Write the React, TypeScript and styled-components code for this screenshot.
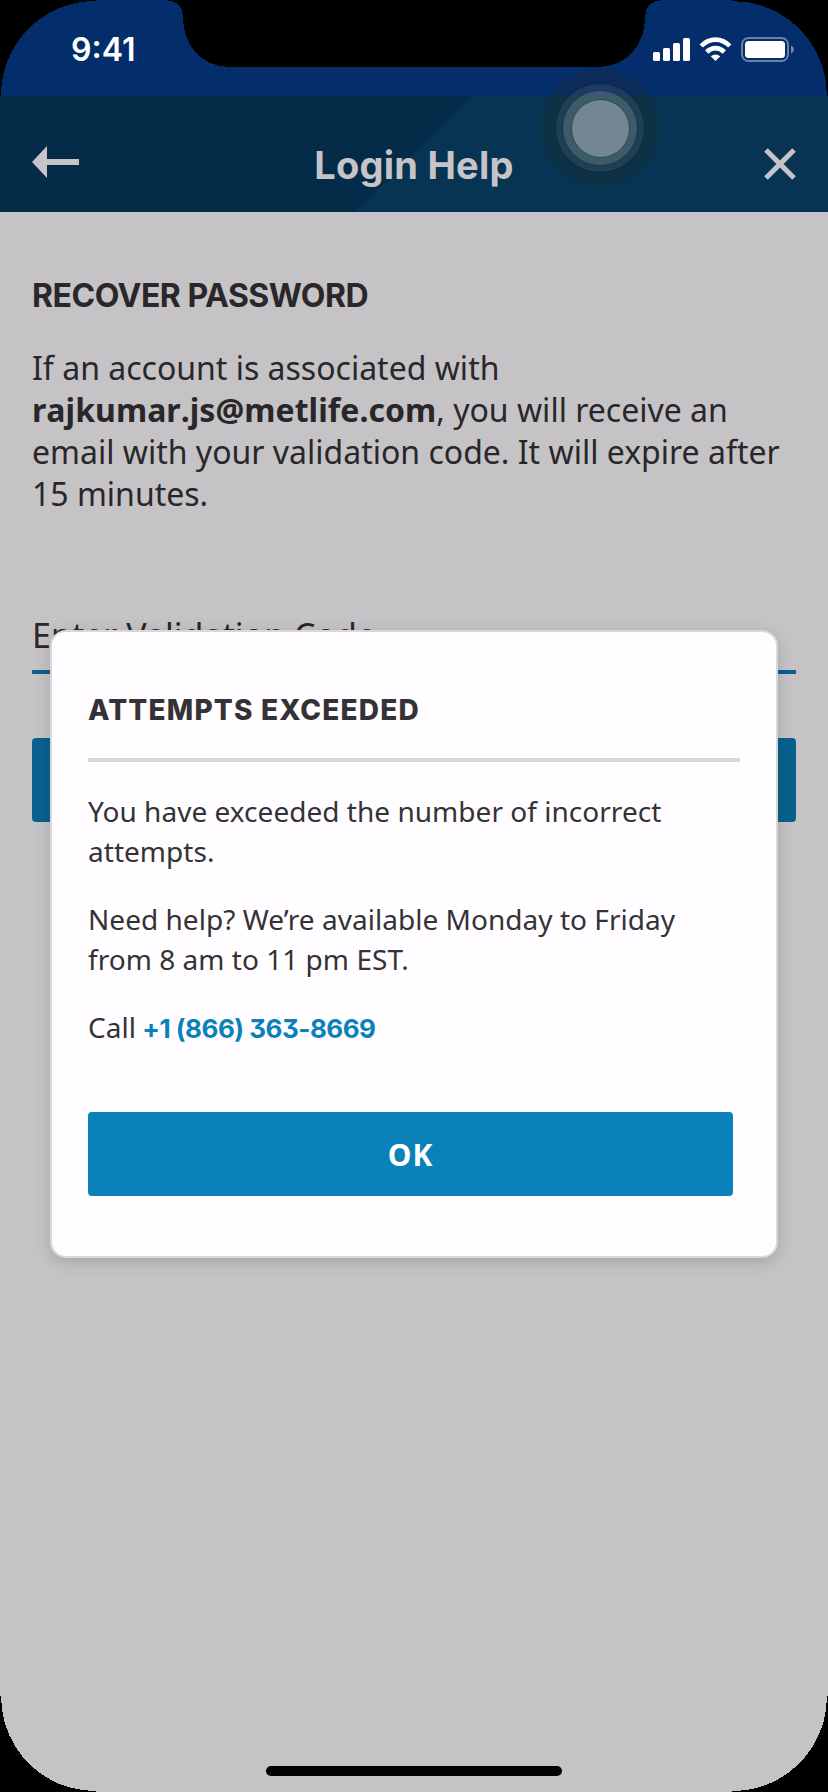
import React from "react";
import styled, { createGlobalStyle } from "styled-components";

const display = `Inter, "Liberation Sans", sans-serif`;
const body = `"Noto Sans", "Open Sans", sans-serif`;

const GlobalStyle = createGlobalStyle`
  * { box-sizing: border-box; }
  html, body { margin: 0; padding: 0; background: #c5c3c6; }
  h1, h2, p { margin: 0; }
  button { border: 0; padding: 0; background: none; font: inherit; color: inherit; }
`;

const Screen = styled.div`
  position: relative;
  display: flex;
  flex-direction: column;
  width: 828px;
  height: 1792px;
  overflow: hidden;
  background: #c5c3c6;
  color: #29272a;
  font-family: ${body};
`;

const StatusBar = styled.div`
  display: flex;
  justify-content: space-between;
  align-items: flex-start;
  height: 96px;
  flex: none;
  padding: 30px 33px 0 71px;
  background: #042d6b;
`;

const Clock = styled.span`
  font: 600 32px/40px ${display};
  letter-spacing: 0;
  color: #fff;
`;

const StatusIcons = styled.svg`
  display: block;
  margin-top: 6px;
`;

const Header = styled.header`
  display: grid;
  grid-template-columns: 48px 1fr 48px;
  align-items: center;
  height: 116px;
  flex: none;
  padding: 22px 32px 0;
  background: linear-gradient(135deg, #042c48 50%, #063452 50%);
  color: #c6c4c8;
`;

const HeaderTitle = styled.h1`
  text-align: center;
  font: 650 38px/48px ${display};
  letter-spacing: 0.25px;
`;

const IconButton = styled.button<{ $align?: "start" | "end"; $lift: number }>`
  display: flex;
  justify-content: ${(p) => p.$align ?? "start"};
  padding-bottom: ${(p) => p.$lift}px;
`;

const Content = styled.main`
  display: flex;
  flex-direction: column;
  padding: 60px 32px 0;
`;

const SectionTitle = styled.h2`
  font: 650 32px/48px ${display};
  letter-spacing: -0.5px;
`;

const Message = styled.p`
  margin-top: 27px;
  font-size: 32px;
  line-height: 42px;
`;

const Email = styled.b`
  font-kerning: none;
  letter-spacing: 0.05px;
`;

const Field = styled.div`
  display: flex;
  align-items: center;
  height: 80px;
  margin-top: 79px;
  padding-top: 5px;
  border-bottom: 4px solid #09628e;
  font-size: 34px;
`;

const SubmitBar = styled.button`
  height: 84px;
  margin-top: 64px;
  border-radius: 4px;
  background: #09628e;
`;

const Dialog = styled.section`
  position: absolute;
  left: 50px;
  top: 630px;
  display: flex;
  flex-direction: column;
  width: 728px;
  height: 628px;
  padding: 56px 36px 0;
  border: 2px solid #d9d8d6;
  border-radius: 16px;
  background: #fffdff;
  box-shadow: 0 4px 16px rgba(0, 0, 0, 0.16);
  color: #343236;
`;

const DialogTitle = styled.h2`
  height: 74px;
  border-bottom: 4px solid #d9d8d6;
  font: 800 28px/45px ${display};
  letter-spacing: 1.2px;
`;

const DialogText = styled.div`
  display: flex;
  flex-direction: column;
  gap: 28px;
  margin-top: 29px;
  font-size: 28px;
  line-height: 40px;
  letter-spacing: 0.03px;
`;

const Phone = styled.a`
  margin-left: -1px;
  font-family: ${display};
  font-weight: 700;
  font-size: 26px;
  line-height: 1;
  letter-spacing: -0.5px;
  font-feature-settings: "cv09";
  color: #0b81b9;
`;

const OkButton = styled.button`
  width: 645px;
  height: 84px;
  margin-top: 65px;
  padding-top: 1px;
  border-radius: 4px;
  background: #0b81b9;
  color: #fff;
  font: 700 30px/83px ${body};
  letter-spacing: 1px;
`;

const TouchHalo = styled.div`
  position: absolute;
  left: 541px;
  top: 69px;
  display: grid;
  place-items: center;
  width: 118px;
  height: 118px;
  border-radius: 50%;
  background: rgba(46, 38, 22, 0.2);
`;

const Ring = styled.div<{ $size: number; $alpha: number }>`
  display: grid;
  place-items: center;
  width: ${(p) => p.$size}px;
  height: ${(p) => p.$size}px;
  border-radius: 50%;
  background: rgba(255, 255, 255, ${(p) => p.$alpha});
  box-shadow: 0 0 0 1px rgba(10, 40, 60, 0.3);
`;

const Bezel = styled.svg`
  position: absolute;
  inset: 0;
  pointer-events: none;
`;

const HomeBar = styled.div`
  position: absolute;
  left: 266px;
  bottom: 16px;
  width: 296px;
  height: 10px;
  border-radius: 5px;
  background: #020103;
`;

const corner = "M0 0V96H1C1 44 42 1 96 1V0Z";

export default function App() {
  return (
    <Screen>
      <GlobalStyle />
      <StatusBar>
        <Clock>9:41</Clock>
        <StatusIcons width="142" height="28" viewBox="653 36 142 28">
          <g fill="#fff">
            <rect x="653" y="52" width="7" height="9" rx="1.5" />
            <rect x="663" y="48" width="7" height="13" rx="1.5" />
            <rect x="673" y="43" width="7" height="18" rx="1.5" />
            <rect x="683" y="38" width="7" height="23" rx="1.5" />
            <path d="M715.5 61L710.7 56.2Q715.5 52.8 720.3 56.2Z" />
            <rect x="745" y="41" width="40" height="17" rx="3.5" />
          </g>
          <g fill="none" stroke="#fff" strokeWidth="4.6">
            <path d="M701.2 46Q707.4 39.6 715.5 39.6T729.8 46" />
            <path d="M706.7 52Q710.6 48.1 715.5 48.1T724.3 52" />
          </g>
          <rect x="742" y="38" width="46" height="23" rx="6.5" fill="none" stroke="#fff" strokeOpacity=".4" strokeWidth="2" />
          <path d="M791 45.5Q794 47 794 49.5T791 53.5Z" fill="#fff" fillOpacity=".45" />
        </StatusIcons>
      </StatusBar>
      <Header>
        <IconButton $lift={6} aria-label="Back">
          <svg width="47" height="32" viewBox="0 0 47 32" fill="currentColor">
            <path d="M0 16L15 0V13H47V19H15V32Z" />
          </svg>
        </IconButton>
        <HeaderTitle>Login Help</HeaderTitle>
        <IconButton $align="end" $lift={2} aria-label="Close">
          <svg width="32" height="32" viewBox="0 0 32 32" stroke="currentColor" strokeWidth="5.2">
            <path d="M2 2L30 30M30 2L2 30" />
          </svg>
        </IconButton>
      </Header>
      <Content>
        <SectionTitle>RECOVER PASSWORD</SectionTitle>
        <Message>
          If an account is associated with
          <br />
          <Email>rajkumar.js@metlife.com</Email>, you will receive an
          <br />
          email with your validation code. It will expire after
          <br />
          15 minutes.
        </Message>
        <Field>Enter Validation Code</Field>
        <SubmitBar aria-label="Submit" />
      </Content>
      <Dialog role="dialog">
        <DialogTitle>ATTEMPTS EXCEEDED</DialogTitle>
        <DialogText>
          <p>
            You have exceeded the number of incorrect
            <br />
            attempts.
          </p>
          <p>
            Need help? We’re available Monday to Friday
            <br />
            from 8 am to 11 pm EST.
          </p>
          <p>
            Call <Phone>+1 (866) 363-8669</Phone>
          </p>
        </DialogText>
        <OkButton>OK</OkButton>
      </Dialog>
      <HomeBar />
      <Bezel width="828" height="1792" viewBox="0 0 828 1792" shapeRendering="crispEdges">
        <path d={corner} />
        <path d={corner} transform="translate(828 0) scale(-1 1)" />
        <path d={corner} transform="translate(0 1792) scale(1 -1)" />
        <path d={corner} transform="translate(828 1792) scale(-1 -1)" />
        <path d="M166 0C178 1 183 6 183 18C183 42 199 67 230 67H598C629 67 645 42 645 18C645 6 650 1 662 0Z" />
      </Bezel>
      <TouchHalo>
        <Ring $size={88} $alpha={0.075}>
          <Ring $size={74} $alpha={0.14}>
            <Ring $size={57} $alpha={0.27} />
          </Ring>
        </Ring>
      </TouchHalo>
    </Screen>
  );
}
